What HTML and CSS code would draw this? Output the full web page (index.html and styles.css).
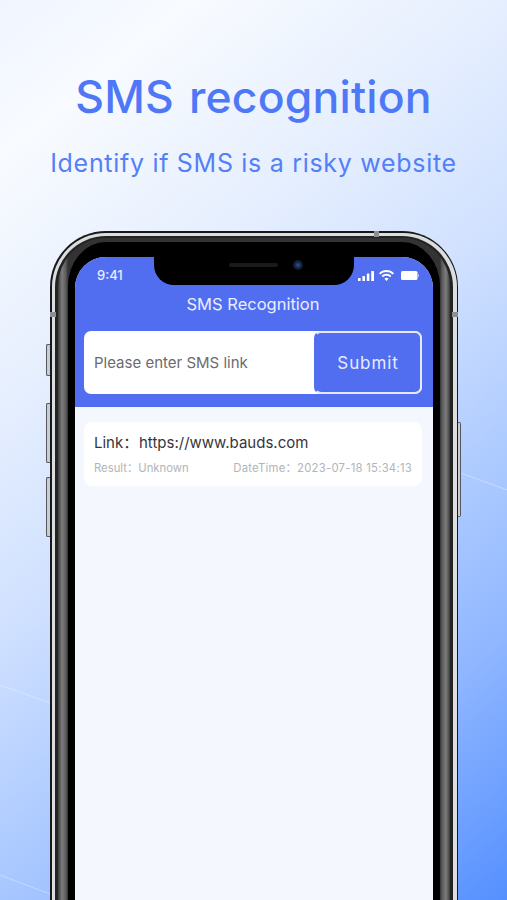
FILE: index.html
```html
<!DOCTYPE html>
<html lang="en">
<head>
<meta charset="utf-8">
<title>SMS recognition</title>
<link rel="stylesheet" href="styles.css">
</head>
<body>
<main class="poster">
  <svg class="streaks" viewBox="0 0 507 900" width="507" height="900" aria-hidden="true">
    <path class="streak" d="M0 685L50 703"/>
    <path class="streak" d="M0 875L50 894"/>
    <path class="streak" d="M458 472L507 490"/>
  </svg>
  <h1 class="headline">SMS recognition</h1>
  <p class="subline">Identify if SMS is a risky website</p>
  <div class="phone">
    <span class="side-btn btn-mute"></span>
    <span class="side-btn btn-up"></span>
    <span class="side-btn btn-down"></span>
    <span class="side-btn btn-power"></span>
    <span class="band-notch notch-top"></span>
    <span class="band-notch notch-left"></span>
    <span class="band-notch notch-right"></span>
    <div class="silver">
      <div class="steel">
        <div class="rim">
          <div class="glass">
            <div class="screen">
              <div class="notch">
                <span class="speaker"></span>
                <span class="camera"></span>
              </div>
              <header class="app-head">
                <div class="status">
                  <span class="clock">9:41</span>
                  <span class="status-icons">
                    <svg width="16" height="10" viewBox="0 0 16 10"><rect x="0" y="7" width="2.6" height="3" rx=".6"/><rect x="4.4" y="5" width="2.6" height="5" rx=".6"/><rect x="8.8" y="2.5" width="2.6" height="7.5" rx=".6"/><rect x="13.2" y="0" width="2.8" height="10" rx=".6"/></svg>
                    <svg class="wifi" width="15" height="11" viewBox="0 0 15 11"><path d="M7.5 11L5.4 8.7a3 3 0 0 1 4.2 0zM3.9 7.2L2.6 5.8a7 7 0 0 1 9.8 0l-1.3 1.4a5.1 5.1 0 0 0-7.2 0zM1.4 4.6L0 3.2a10.6 10.6 0 0 1 15 0l-1.4 1.4a8.7 8.7 0 0 0-12.2 0z"/></svg>
                    <svg width="18" height="9" viewBox="0 0 18 9"><rect x="0" y="0" width="16.5" height="9" rx="1.6"/><rect x="17" y="3" width="1" height="3" rx=".5" opacity=".5"/></svg>
                  </span>
                </div>
                <h2 class="app-title">SMS Recognition</h2>
                <div class="search">
                  <span class="placeholder">Please enter SMS link</span>
                  <span class="submit">Submit</span>
                </div>
              </header>
              <section class="records">
                <article class="record">
                  <div class="record-link"><span class="record-label">Link：</span>https://www.bauds.com</div>
                  <div class="record-meta">
                    <span class="meta-result">Result：Unknown</span>
                    <span class="meta-time">DateTime：2023-07-18 15:34:13</span>
                  </div>
                </article>
              </section>
            </div>
          </div>
        </div>
      </div>
    </div>
  </div>
</main>
</body>
</html>
```

FILE: styles.css
```css
* { box-sizing: border-box; }
html, body { margin: 0; height: 900px; overflow: hidden; }
body { font-family: Inter, "Noto Sans CJK SC", sans-serif; }

.poster {
  position: relative;
  width: 507px;
  height: 900px;
  overflow: hidden;
  display: flex;
  flex-direction: column;
  align-items: center;
  background: linear-gradient(141deg, #f0f5ff 0%, #f8fbff 12%, #e6effe 31%, #cfe0ff 49%, #a6c6ff 69%, #8fb6ff 80%, #5590ff 100%);
}
.streaks { position: absolute; left: 0; top: 0; }
.streak { stroke: rgba(255,255,255,.28); stroke-width: 1.3; fill: none; }

.headline {
  position: relative;
  margin: 68px 0 0;
  font-size: 44.5px;
  line-height: 58px;
  font-weight: 500;
  letter-spacing: 0.2px;
  word-spacing: 3px;
  color: #4f78f6;
}
.subline {
  position: relative;
  margin: 22px 0 0;
  font-size: 25px;
  line-height: 30px;
  font-weight: 400;
  letter-spacing: 0.7px;
  color: #5480f6;
}

.phone {
  position: relative;
  flex: none;
  width: 408px;
  height: 760px;
  margin-top: 53px;
  margin-left: 1px;
  padding: 1.5px;
  border-radius: 56px;
  background: #17181a;
}
.silver {
  height: 100%;
  padding: 3.5px 3.5px 0;
  border-radius: 54px;
  background: #dcdddf;
}
.steel {
  height: 100%;
  padding: 2px 3px 0;
  border-radius: 51px;
  background: #232324;
}
.rim {
  height: 100%;
  padding: 4px 10px 0;
  border-radius: 48px;
  background: linear-gradient(90deg, #3a3a3a 0, #7d7d7d 4px, #5a5a5a 8px, #333 10px, #333 calc(100% - 10px), #5a5a5a calc(100% - 8px), #7d7d7d calc(100% - 4px), #3a3a3a 100%);
}
.glass {
  height: 100%;
  padding: 15px 7px 0;
  border-radius: 38px 38px 0 0 / 44px 44px 0 0;
  background: #000;
}
.screen {
  position: relative;
  height: 100%;
  border-radius: 31px 31px 0 0;
  overflow: hidden;
  background: #f4f8fe;
  display: flex;
  flex-direction: column;
}

.notch {
  position: absolute;
  left: 79px;
  top: 0;
  width: 200px;
  height: 28px;
  background: #000;
  border-radius: 0 0 20px 20px;
}
.speaker {
  position: absolute;
  left: 75px;
  top: 6px;
  width: 49px;
  height: 4px;
  border-radius: 2px;
  background: #1a1a1c;
}
.camera {
  position: absolute;
  left: 139px;
  top: 3px;
  width: 10px;
  height: 10px;
  border-radius: 50%;
  background: radial-gradient(circle, #2d5a94 0, #14223a 45%, #0a0c12 100%);
}

.app-head {
  flex: none;
  height: 150px;
  padding: 0 11px 0 9px;
  background: #526ef0;
}
.status {
  display: flex;
  justify-content: space-between;
  align-items: center;
  height: 15px;
  margin-top: 11px;
  padding: 0 3px 0 13px;
}
.clock { font-size: 13px; line-height: 15px; font-weight: 500; color: #e8edff; }
.status-icons { display: flex; align-items: center; }
.status-icons svg { fill: #fff; display: block; }
.status-icons .wifi { margin: 0 7px 0 5px; }

.app-title {
  margin: 9px 0 0;
  height: 24px;
  font-size: 16.5px;
  line-height: 24px;
  font-weight: 400;
  text-align: center;
  color: #e9eeff;
}
.search {
  display: flex;
  align-items: stretch;
  height: 63px;
  margin-top: 15px;
  border-radius: 7px;
  background: #fff;
  overflow: hidden;
}
.placeholder {
  flex: 1;
  align-self: center;
  padding-left: 10px;
  font-size: 15px;
  color: #6b6b6e;
}
.submit {
  flex: none;
  width: 108px;
  display: flex;
  align-items: center;
  justify-content: center;
  border: 2px solid #e4e9fe;
  border-left-color: #526ef0;
  border-radius: 7px;
  background: #526ef0;
  font-size: 17px;
  letter-spacing: 0.9px;
  color: #e6ebff;
}

.records {
  flex: 1;
  padding: 15px 11px 0 9px;
}
.record {
  height: 64px;
  padding: 11px 10px 0;
  border-radius: 8px;
  background: #fff;
}
.record-link {
  font-size: 15px;
  line-height: 20px;
  color: #35363b;
}
.record-label { display: inline-block; width: 45px; }
.record-meta {
  display: flex;
  justify-content: space-between;
  margin-top: 7px;
  font-size: 11.3px;
  line-height: 16px;
  color: #b2b4b8;
}
.meta-time { letter-spacing: 0.25px; }

.side-btn {
  position: absolute;
  width: 4px;
  background: #c9ccd2;
  border: 1px solid #55585e;
  border-right: 0;
  border-radius: 2px 0 0 2px;
}
.btn-mute { left: -4px; top: 113px; height: 32px; }
.btn-up { left: -4px; top: 172px; height: 60px; }
.btn-down { left: -4px; top: 246px; height: 60px; }
.btn-power { right: -3px; top: 191px; width: 3px; height: 95px; border: 1px solid #55585e; border-left: 0; border-radius: 0 2px 2px 0; }

.band-notch { position: absolute; background: #8d8f92; z-index: 1; }
.notch-top { left: 324px; top: 0; width: 5px; height: 6px; }
.notch-left { left: 0; top: 81px; width: 6px; height: 5px; }
.notch-right { right: 0; top: 81px; width: 6px; height: 5px; }
```
